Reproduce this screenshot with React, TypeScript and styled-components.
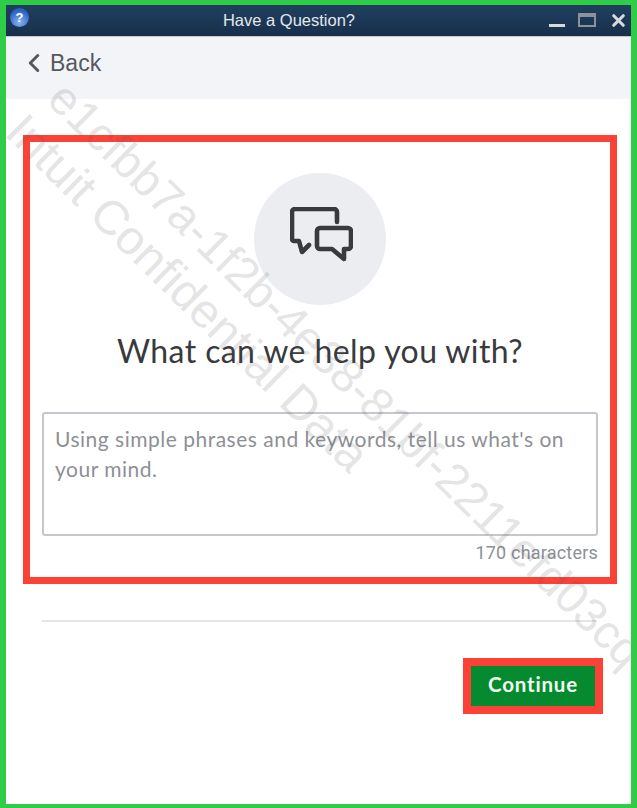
import React from 'react';
import styled, { createGlobalStyle } from 'styled-components';
import { ChevronLeft, X } from 'lucide-react';

const GlobalStyle = createGlobalStyle`
  html, body {
    margin: 0;
    padding: 0;
    background: #fff;
  }
`;

const Frame = styled.div`
  position: relative;
  box-sizing: border-box;
  width: 637px;
  height: 808px;
  overflow: hidden;
  border: solid #2ecc47;
  border-width: 5px 6px 4px 6px;
  background: #fff;
  display: flex;
  flex-direction: column;
  font-family: "Lato", "Liberation Sans", sans-serif;
`;

const TitleBar = styled.div`
  position: relative;
  flex: none;
  height: 32px;
  padding-right: 59px;
  display: flex;
  align-items: center;
  justify-content: center;
  background: linear-gradient(#20405f, #182f4b);
  border-bottom: 1px solid #c3c8d2;
  box-sizing: border-box;
`;

const HelpBall = styled.div`
  position: absolute;
  left: 4px;
  top: 3px;
  width: 19px;
  height: 19px;
  border-radius: 50%;
  background: radial-gradient(circle at 50% 75%, #8ab4f4, #2a5fc4 70%);
  color: #fff;
  font: bold 13px/19px "Liberation Sans", sans-serif;
  text-align: center;
`;

const TitleText = styled.span`
  color: #e3e8ee;
  font: 16.5px "Liberation Sans", sans-serif;
`;

const WindowButtons = styled.div`
  position: absolute;
  right: 3px;
  top: 8px;
  height: 14px;
  display: flex;
  align-items: center;
  gap: 13px;
  color: #d6dadd;
`;

const MinimizeBar = styled.div`
  align-self: flex-end;
  width: 16px;
  height: 3px;
  background: #d6dadd;
`;

const MaximizeBox = styled.div`
  width: 18px;
  height: 14px;
  border: 2px solid #8b929b;
  border-top-width: 4px;
  box-sizing: border-box;
`;

const BackBar = styled.div`
  flex: none;
  height: 62px;
  display: flex;
  align-items: center;
  gap: 1px;
  padding: 0 0 10px 13px;
  box-sizing: border-box;
  background: #f3f4f8;
  color: #55585e;
  font: 23px "Liberation Sans", sans-serif;
`;

const Content = styled.div`
  flex: 1;
  display: flex;
  flex-direction: column;
  padding: 36px 14px 0 17px;
`;

const Highlight = styled.section`
  box-sizing: border-box;
  height: 449px;
  border: 7px solid #fc4237;
  padding: 31px 12px 0;
  display: flex;
  flex-direction: column;
  align-items: center;
`;

const IconCircle = styled.div`
  box-sizing: border-box;
  width: 132px;
  height: 132px;
  padding: 0 0 9px 2px;
  border-radius: 50%;
  background: #ecedf1;
  display: flex;
  align-items: center;
  justify-content: center;
  color: #393a3d;
`;

const Heading = styled.h1`
  margin: 26px 0 0;
  font-size: 32px;
  line-height: 40px;
  font-weight: 400;
  letter-spacing: 0.4px;
  color: #393a3d;
`;

const TextBox = styled.div`
  box-sizing: border-box;
  align-self: stretch;
  height: 124px;
  margin-top: 41px;
  padding: 10px 11px;
  border: 2px solid #c4c7cc;
  border-radius: 3px;
  color: #8d9096;
  font-size: 21px;
  letter-spacing: 0.5px;
  line-height: 30px;
`;

const Counter = styled.div`
  align-self: flex-end;
  margin-top: 6px;
  color: #8d9096;
  font-family: "Roboto", "Liberation Sans", sans-serif;
  font-size: 18px;
  letter-spacing: 0.2px;
  line-height: 22px;
`;

const Divider = styled.hr`
  margin: 36px 20px 0 19px;
  height: 2px;
  border: 0;
  background: #e3e5e8;
`;

const Actions = styled.div`
  display: flex;
  justify-content: flex-end;
  margin-top: 36px;
  padding-right: 14px;
`;

const ContinueButton = styled.button`
  box-sizing: border-box;
  width: 140px;
  height: 56px;
  border: 8px solid #fc4237;
  background: #068a2f;
  color: #f2fbf2;
  font-family: inherit;
  font-size: 20.5px;
  font-weight: 700;
  letter-spacing: 0.8px;
  padding: 0 0 4px;
`;

const Watermark = styled.div<{ $top: number; $left: number; $size: number }>`
  position: absolute;
  top: ${p => p.$top}px;
  left: ${p => p.$left}px;
  font: ${p => p.$size}px "Liberation Sans", sans-serif;
  color: rgba(90, 90, 90, 0.18);
  white-space: nowrap;
  transform: rotate(44.5deg);
  transform-origin: 0 0;
  pointer-events: none;
`;

const ChatIcon = () => (
  <svg width="63" height="55" viewBox="0 0 63 55" fill="none" stroke="currentColor" strokeWidth="4.6" strokeLinejoin="round" strokeLinecap="round">
    <path d="M47 15V5a3 3 0 0 0-3-3H5a3 3 0 0 0-3 3v27a2 2 0 0 0 2 2h5l3 11 7-7" />
    <path d="M30 21h28a3 3 0 0 1 3 3v15a3 3 0 0 1-3 3h-4v10L42 42H30a3 3 0 0 1-3-3V24a3 3 0 0 1 3-3z" />
  </svg>
);

export default function App() {
  return (
    <>
      <GlobalStyle />
      <Frame>
        <TitleBar>
          <HelpBall>?</HelpBall>
          <TitleText>Have a Question?</TitleText>
          <WindowButtons>
            <MinimizeBar />
            <MaximizeBox />
            <X size={19} strokeWidth={4} />
          </WindowButtons>
        </TitleBar>
        <BackBar>
          <ChevronLeft size={30} strokeWidth={2.4} />
          Back
        </BackBar>
        <Content>
          <Highlight>
            <IconCircle>
              <ChatIcon />
            </IconCircle>
            <Heading>What can we help you with?</Heading>
            <TextBox>Using simple phrases and keywords, tell us what's on your mind.</TextBox>
            <Counter>170 characters</Counter>
          </Highlight>
          <Divider />
          <Actions>
            <ContinueButton>Continue</ContinueButton>
          </Actions>
        </Content>
        <Watermark $top={65} $left={70} $size={47}>e1cfbb7a-1f2b-4e38-81bf-2211efd03cq</Watermark>
        <Watermark $top={98} $left={28} $size={48}>Intuit Confidential Data</Watermark>
      </Frame>
    </>
  );
}
